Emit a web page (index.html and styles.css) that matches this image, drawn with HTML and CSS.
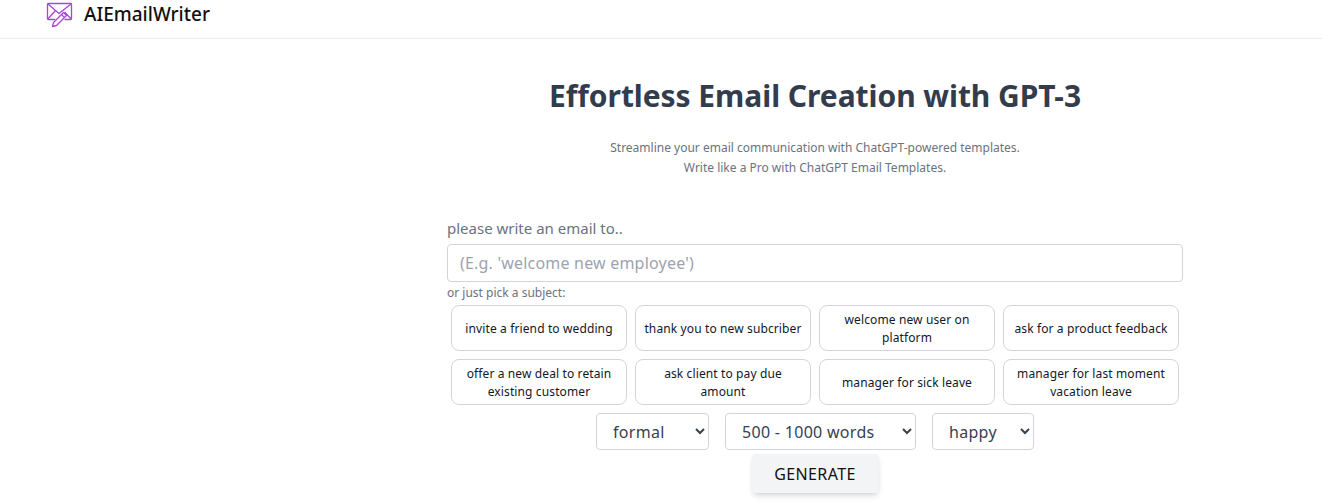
FILE: index.html
```html
<!DOCTYPE html>
<html lang="en">

<head>
    <meta charset="UTF-8">
    <meta name="viewport" content="width=device-width, initial-scale=1.0">
    <title>AIEmailWriter</title>
    <link rel="stylesheet" href="styles.css">
</head>

<body>
    <!-- Top bar -->
    <nav class="navbar">
        <svg class="logo" viewBox="0 0 28 28" width="28" height="28" fill="none" stroke="#a845d6" stroke-width="1.3" stroke-linejoin="round">
            <path d="M10 19.500H3.500a1 1 0 0 1-1-1V4.500a1 1 0 0 1 1-1h22a1 1 0 0 1 1 1v14a1 1 0 0 1-1 1h-6" />
            <path d="M3 4l11 9.500L26 4" />
            <path d="M2.800 19l7.700-8.500M26.200 19l-6.700-7" />
            <path d="M7.500 26.500l1-4 10-10 3 3-10 10z" />
            <path d="M16.500 14.500l3 3" />
        </svg>
        <span class="brand">AIEmailWriter</span>
    </nav>

    <div class="page">
        <div class="spacer"></div>
        <main class="main">
            <h1 class="title">Effortless Email Creation with GPT-3</h1>
            <p class="subtitle">Streamline your email communication with ChatGPT-powered templates.<br>Write like a Pro with ChatGPT Email Templates.</p>

            <div class="form">
                <label class="label" for="subject">please write an email to..</label>
                <input class="subject-input" id="subject" type="text" placeholder="(E.g. 'welcome new employee')">
                <p class="hint">or just pick a subject:</p>

                <div class="chips">
                    <button class="chip">invite a friend to wedding</button>
                    <button class="chip">thank you to new subcriber</button>
                    <button class="chip">welcome new user on platform</button>
                    <button class="chip">ask for a product feedback</button>
                    <button class="chip">offer a new deal to retain existing customer</button>
                    <button class="chip">ask client to pay due amount</button>
                    <button class="chip">manager for sick leave</button>
                    <button class="chip">manager for last moment vacation leave</button>
                </div>

                <div class="options">
                    <select class="option option-tone">
                        <option>formal</option>
                    </select>
                    <select class="option option-length">
                        <option>500 - 1000 words</option>
                    </select>
                    <select class="option option-mood">
                        <option>happy</option>
                    </select>
                </div>

                <button class="generate">GENERATE</button>
            </div>
        </main>
    </div>
</body>

</html>
```

FILE: styles.css
```css
* {
    box-sizing: border-box;
}

body {
    margin: 0;
    height: 504px;
    overflow: hidden;
    background-color: #fff;
    font-family: "Noto Sans", "Open Sans", sans-serif;
    color: #374151;
}

.navbar {
    display: flex;
    align-items: center;
    height: 39px;
    padding: 0 0 10px 45px;
    border-bottom: 1px solid #ececec;
}

.logo {
    flex-shrink: 0;
}

.brand {
    margin-left: 11px;
    font-size: 19px;
    font-weight: 500;
    color: #111;
}

.page {
    display: flex;
}

.spacer {
    width: 308px;
    flex-shrink: 0;
}

.main {
    flex: 1;
    display: flex;
    flex-direction: column;
    align-items: center;
}

.title {
    margin: 36px 0 0;
    font-size: 30px;
    line-height: 42px;
    font-weight: 700;
    letter-spacing: -0.05px;
    color: #333c4d;
}

.subtitle {
    margin: 21px 0 0;
    font-size: 12px;
    line-height: 20px;
    text-align: center;
    color: #6b7280;
}

.form {
    width: 736px;
    margin-top: 38px;
    display: flex;
    flex-direction: column;
}

.label {
    font-size: 15px;
    line-height: 24px;
    color: #6b7280;
}

.subject-input {
    width: 100%;
    height: 38px;
    margin-top: 4px;
    padding: 0 12px;
    border: 1px solid #d1d5db;
    border-radius: 4px;
    font-family: inherit;
    font-size: 16px;
    letter-spacing: 0.2px;
    color: #374151;
}

.subject-input::placeholder {
    color: #9ca3af;
}

.hint {
    margin: 1px 0 0;
    font-size: 12px;
    line-height: 19px;
    color: #6b7280;
}

.chips {
    display: grid;
    grid-template-columns: repeat(4, 176px);
    grid-auto-rows: 46px;
    gap: 8px;
    justify-content: center;
    margin-top: 3px;
}

.chip {
    padding: 1px 8px 0;
    border: 1px solid #d1d5db;
    border-radius: 8px;
    background-color: #fff;
    font-family: inherit;
    font-size: 12px;
    letter-spacing: 0.12px;
    line-height: 18px;
    color: #111827;
}

.options {
    display: flex;
    justify-content: center;
    gap: 16px;
    margin-top: 8px;
}

.option {
    height: 37px;
    padding: 0 8px 0 12px;
    border: 1px solid #d1d5db;
    border-radius: 4px;
    background-color: #fff;
    font-family: inherit;
    font-size: 16px;
    letter-spacing: 0.3px;
    color: #374151;
}

.option-tone {
    width: 113px;
}

.option-length {
    width: 191px;
}

.option-mood {
    width: 102px;
}

.generate {
    align-self: center;
    width: 127px;
    height: 39px;
    margin-top: 4px;
    border: none;
    border-radius: 4px;
    background-color: #f3f4f6;
    box-shadow: 0 4px 6px -1px rgba(0, 0, 0, 0.12), 0 2px 4px -2px rgba(0, 0, 0, 0.1);
    font-family: inherit;
    font-size: 16px;
    letter-spacing: 0.4px;
    color: #111;
}
```
